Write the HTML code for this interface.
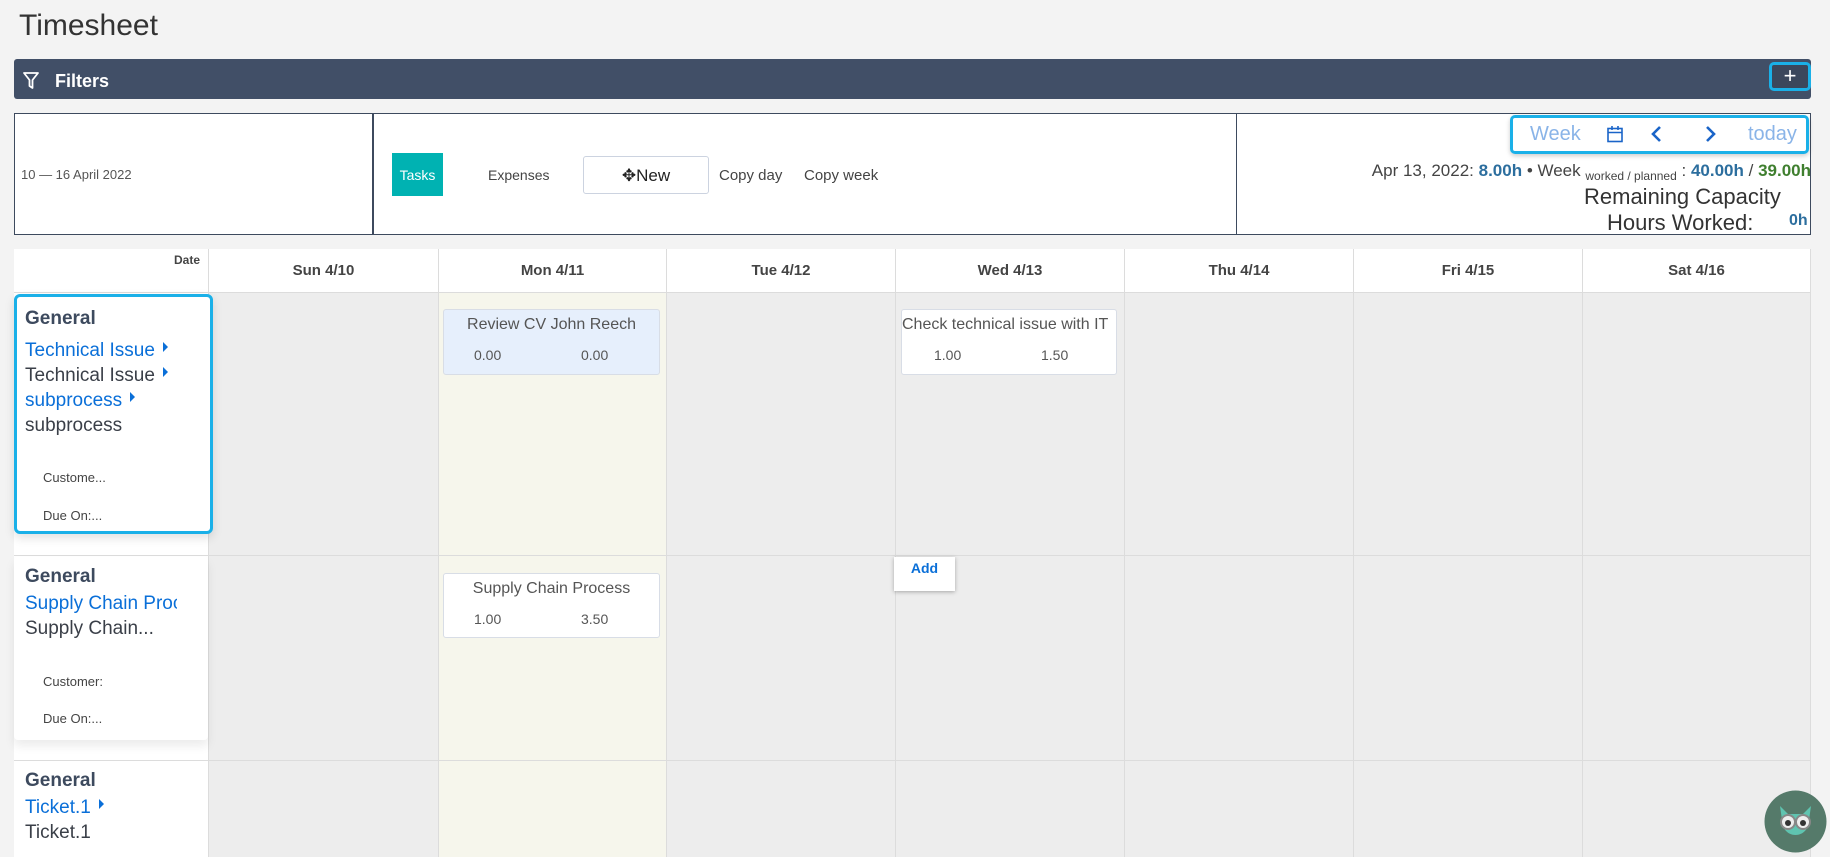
<!DOCTYPE html>
<html><head><meta charset="utf-8"><style>
*{box-sizing:border-box;margin:0;padding:0}
body{width:1830px;height:857px;background:#f3f3f3;font-family:"Liberation Sans",sans-serif;position:relative;overflow:hidden;color:#333}
.a{position:absolute;white-space:nowrap}
.col{position:absolute;top:292px;height:565px;border-left:1px solid #dcdcdc;background:#ededed}
.hd{position:absolute;top:249px;height:43px;border-left:1px solid #dcdcdc;background:#fff;font-weight:bold;font-size:15px;color:#444;text-align:center;line-height:43px}
.hl{position:absolute;left:14px;width:1797px;height:1px;background:#dcdcdc}
.lt{font-size:19px;line-height:25px}
.bl{color:#0a6fd8}.dk{color:#3a3f48}
.gen{font-weight:bold;color:#3d4a5e;font-size:19px}
.small{font-size:13px;color:#444}
.card{position:absolute;border:1px solid #d8dde6;border-radius:3px;text-align:center;color:#555}
.card .t{font-size:16px;margin-top:6px}
.card .n{font-size:14px;position:absolute;top:37px}
.tri{display:inline-block;width:0;height:0;border-left:5px solid #0a6fd8;border-top:5px solid transparent;border-bottom:5px solid transparent;margin-left:8px;vertical-align:4px}
</style></head><body>
<div class="a" style="left:19px;top:9px;font-size:30px;color:#333">Timesheet</div>

<div class="a" style="left:14px;top:59px;width:1797px;height:40px;background:#414f67;border-radius:3px"></div>
<svg class="a" style="left:22px;top:71px" width="18" height="20" viewBox="0 0 18 20"><path d="M2 2h14l-5.5 7v8l-3-2v-6z" fill="none" stroke="#fff" stroke-width="1.8" stroke-linejoin="round"/></svg>
<div class="a" style="left:55px;top:71px;font-size:18px;font-weight:bold;color:#fff">Filters</div>
<div class="a" style="left:1769px;top:62px;width:42px;height:29px;border:3px solid #1ab0e8;border-radius:5px;background:#3b475c;color:#fff;font-size:22px;text-align:center;line-height:21px">+</div>

<div class="a" style="left:14px;top:113px;width:1797px;height:122px;background:#fff;border:1.5px solid #3d4a5e"></div>
<div class="a" style="left:372px;top:113px;width:1.5px;height:122px;background:#3d4a5e"></div>
<div class="a" style="left:1236px;top:113px;width:1px;height:122px;background:#3d4a5e"></div>
<div class="a" style="left:21px;top:167px;font-size:13px;color:#555">10 — 16 April 2022</div>
<div class="a" style="left:392px;top:153px;width:51px;height:43px;background:#00b2b2;color:#fff;font-size:14px;text-align:center;line-height:45px">Tasks</div>
<div class="a" style="left:488px;top:167px;font-size:14px;color:#444">Expenses</div>
<div class="a" style="left:583px;top:156px;width:126px;height:38px;border:1px solid #ccd3e0;border-radius:3px;background:#fff;font-size:17px;color:#222;text-align:center;line-height:38px">✥New</div>
<div class="a" style="left:719px;top:167px;font-size:15px;color:#444">Copy day</div>
<div class="a" style="left:804px;top:167px;font-size:15px;color:#444">Copy week</div>

<div class="a" style="left:1510px;top:115px;width:299px;height:39px;border:3px solid #1ab0e8;border-radius:5px;box-shadow:0 2px 5px rgba(0,0,0,.2)"></div>
<div class="a" style="left:1530px;top:123px;font-size:20px;color:#8ab4e8">Week</div>
<svg class="a" style="left:1606px;top:125px" width="18" height="19" viewBox="0 0 18 19"><rect x="2" y="3.5" width="14" height="13" fill="none" stroke="#1a64c8" stroke-width="1.6"/><path d="M2 7.5h14M6 1v4M12 1v4" stroke="#1a64c8" stroke-width="1.6"/></svg>
<svg class="a" style="left:1650px;top:125px" width="14" height="18" viewBox="0 0 14 18"><path d="M10 2L3 9l7 7" fill="none" stroke="#1a64c8" stroke-width="2.6"/></svg>
<svg class="a" style="left:1703px;top:125px" width="14" height="18" viewBox="0 0 14 18"><path d="M4 2l7 7-7 7" fill="none" stroke="#1a64c8" stroke-width="2.6"/></svg>
<div class="a" style="left:1748px;top:123px;font-size:20px;color:#8ab4e8">today</div>

<div class="a" style="right:19px;top:161px;font-size:17px;color:#444">Apr 13, 2022: <b style="color:#2c6e9e">8.00h</b> • Week <span style="font-size:12px;vertical-align:-4px">worked / planned</span> : <b style="color:#2c6e9e">40.00h</b> / <b style="color:#3f7f2f">39.00h</b></div>
<div class="a" style="left:1584px;top:184px;font-size:22px;color:#333">Remaining Capacity</div>
<div class="a" style="left:1607px;top:210px;font-size:22px;color:#333">Hours Worked:</div>
<div class="a" style="left:1789px;top:212px;font-size:16px;font-weight:bold;color:#2c6e9e">0h</div>

<!-- table -->
<div class="a" style="left:14px;top:249px;width:1797px;height:608px;background:#fff;border:1px solid #dcdcdc"></div>
<div class="a" style="left:14px;top:249px;width:194px;height:608px;background:#fff"></div>
<div class="a" style="left:174px;top:253px;font-size:12px;font-weight:bold;color:#444">Date</div>
<div class="hd" style="left:208px;width:230px">Sun 4/10</div>
<div class="hd" style="left:438px;width:228px">Mon 4/11</div>
<div class="hd" style="left:666px;width:229px">Tue 4/12</div>
<div class="hd" style="left:895px;width:229px">Wed 4/13</div>
<div class="hd" style="left:1124px;width:229px">Thu 4/14</div>
<div class="hd" style="left:1353px;width:229px">Fri 4/15</div>
<div class="hd" style="left:1582px;width:229px;border-right:1px solid #dcdcdc">Sat 4/16</div>
<div class="col" style="left:208px;width:230px"></div>
<div class="col" style="left:438px;width:228px;background:#f6f6ec"></div>
<div class="col" style="left:666px;width:229px"></div>
<div class="col" style="left:895px;width:229px"></div>
<div class="col" style="left:1124px;width:229px"></div>
<div class="col" style="left:1353px;width:229px"></div>
<div class="col" style="left:1582px;width:229px;border-right:1px solid #dcdcdc"></div>
<div class="hl" style="top:292px"></div>
<div class="hl" style="top:555px"></div>
<div class="hl" style="top:760px"></div>

<!-- row1 left -->
<div class="a" style="left:14px;top:294px;width:199px;height:240px;border:3px solid #1ab0e8;border-radius:6px;background:#fff;box-shadow:0 4px 10px rgba(0,0,0,.12)"></div>
<div class="a gen" style="left:25px;top:308px">General</div>
<div class="a lt bl" style="left:25px;top:338px">Technical Issue<span class="tri"></span></div>
<div class="a lt dk" style="left:25px;top:363px">Technical Issue<span class="tri"></span></div>
<div class="a lt bl" style="left:25px;top:388px">subprocess<span class="tri"></span></div>
<div class="a lt dk" style="left:25px;top:413px">subprocess</div>
<div class="a small" style="left:43px;top:470px">Custome...</div>
<div class="a small" style="left:43px;top:508px">Due On:...</div>

<!-- row2 left -->
<div class="a" style="left:14px;top:557px;width:194px;height:183px;background:#fff;border-radius:4px;box-shadow:0 6px 10px rgba(0,0,0,.08)"></div>
<div class="a gen" style="left:25px;top:566px">General</div>
<div class="a lt bl" style="left:25px;top:591px;width:152px;overflow:hidden">Supply Chain Process</div>
<div class="a lt dk" style="left:25px;top:616px">Supply Chain...</div>
<div class="a small" style="left:43px;top:674px">Customer:</div>
<div class="a small" style="left:43px;top:711px">Due On:...</div>

<!-- row3 left -->
<div class="a gen" style="left:25px;top:770px">General</div>
<div class="a lt bl" style="left:25px;top:795px">Ticket.1<span class="tri"></span></div>
<div class="a lt dk" style="left:25px;top:820px">Ticket.1</div>

<!-- cards -->
<div class="card" style="left:443px;top:309px;width:217px;height:66px;background:#e6effc">
<div class="t">Review CV John Reech</div><div class="n" style="left:30px">0.00</div><div class="n" style="left:137px">0.00</div></div>
<div class="card" style="left:443px;top:573px;width:217px;height:65px;background:#fff">
<div class="t">Supply Chain Process</div><div class="n" style="left:30px">1.00</div><div class="n" style="left:137px">3.50</div></div>
<div class="card" style="left:901px;top:309px;width:216px;height:66px;background:#fff;text-align:left">
<div class="t" style="margin-left:0">Check technical issue with IT</div><div class="n" style="left:32px">1.00</div><div class="n" style="left:139px">1.50</div></div>
<div class="a" style="left:894px;top:557px;width:61px;height:34px;background:#fff;box-shadow:0 1px 4px rgba(0,0,0,.3);color:#0a6fd8;font-weight:bold;font-size:14px;text-align:center;line-height:22px">Add</div>

<!-- owl -->
<svg class="a" style="left:1764px;top:790px" width="63" height="63" viewBox="0 0 63 63"><circle cx="31.5" cy="31.5" r="31" fill="#557a6a"/><path d="M16 16l8 8h15l8-8-2 14c0 9-6 15-13.5 15S18 39 18 30z" fill="#5fc4b0"/><circle cx="24" cy="32" r="7" fill="#eee" stroke="#888" stroke-width="2"/><circle cx="39" cy="32" r="7" fill="#eee" stroke="#888" stroke-width="2"/><circle cx="24" cy="33" r="3" fill="#333"/><circle cx="39" cy="33" r="3" fill="#333"/></svg>
</body></html>
